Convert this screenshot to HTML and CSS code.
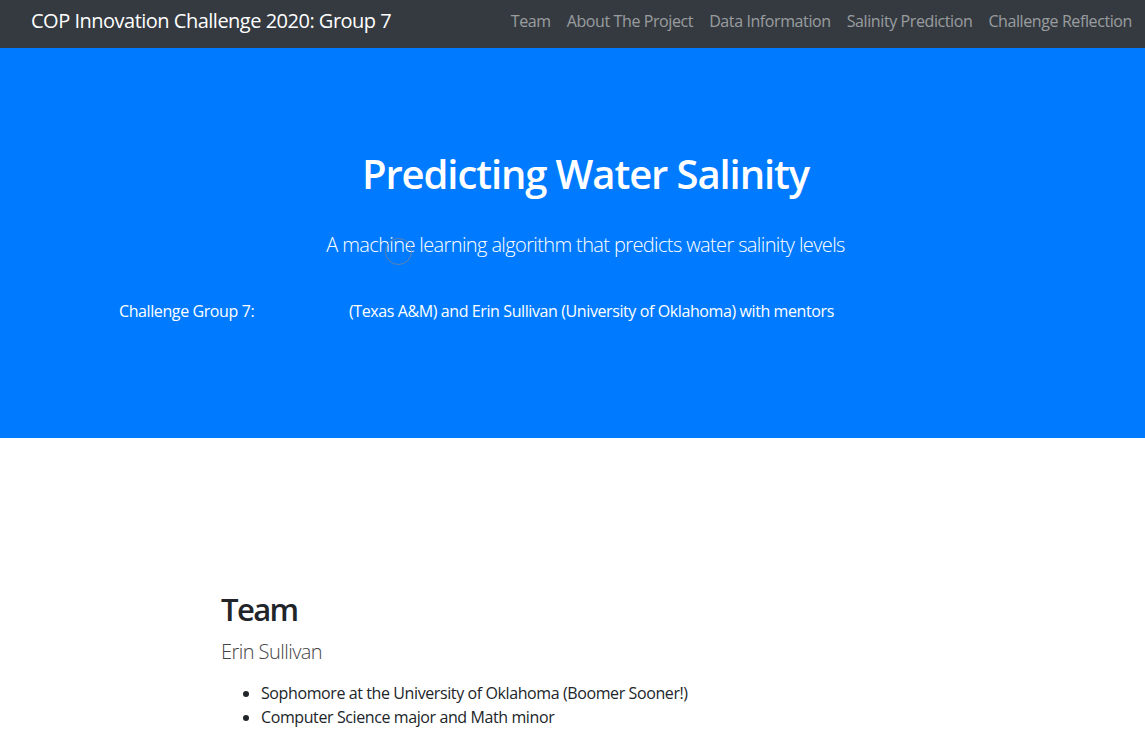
FILE: index.html
```html
<!DOCTYPE html>
<html lang="en">
<head>
<meta charset="utf-8">
<title>COP Innovation Challenge 2020: Group 7</title>
<link rel="stylesheet" href="styles.css">
</head>
<body>
<nav class="navbar">
  <a class="brand" href="#">COP Innovation Challenge 2020: Group 7</a>
  <ul class="nav-links">
    <li><a href="#team">Team</a></li>
    <li><a href="#about">About The Project</a></li>
    <li><a href="#data">Data Information</a></li>
    <li><a href="#prediction">Salinity Prediction</a></li>
    <li><a href="#reflection">Challenge Reflection</a></li>
  </ul>
</nav>
<header class="hero">
  <h1 class="hero-title">Predicting Water Salinity</h1>
  <p class="hero-lead">A machine learning algorithm that predicts water salinity levels</p>
  <p class="hero-group"><span class="group-label">Challenge Group 7:</span><span class="group-names">(Texas A&amp;M) and Erin Sullivan (University of Oklahoma) with mentors</span></p>
  <span class="cursor-ring"></span>
</header>
<section class="team" id="team">
  <h2 class="team-title">Team</h2>
  <p class="member">Erin Sullivan</p>
  <ul class="member-list">
    <li>Sophomore at the University of Oklahoma (Boomer Sooner!)</li>
    <li>Computer Science major and Math minor</li>
  </ul>
</section>
</body>
</html>
```

FILE: styles.css
```css
* { box-sizing: border-box; }
html, body { margin: 0; padding: 0; }
body {
  font-family: "Open Sans", "Noto Sans", "Liberation Sans", sans-serif;
  color: #212529;
  background: #fff;
  font-size: 16px;
  line-height: 1.5;
  overflow: hidden;
}
.navbar {
  height: 48px;
  background: #343a40;
  display: flex;
  align-items: center;
  justify-content: space-between;
  padding: 0 5px 6px 31px;
}
.brand {
  color: #fff;
  text-decoration: none;
  font-size: 20px;
  letter-spacing: -0.5px;
}
.nav-links {
  list-style: none;
  margin: 0;
  padding: 0;
  display: flex;
}
.nav-links a {
  display: block;
  padding: 0 8px;
  color: rgba(255, 255, 255, 0.5);
  text-decoration: none;
  font-size: 16px;
  letter-spacing: -0.4px;
}
.hero {
  position: relative;
  height: 390px;
  background: #007bff;
  color: #fff;
  display: flex;
  flex-direction: column;
  padding-top: 98px;
}
.hero-title {
  margin: 0;
  text-align: center;
  padding-left: 26px;
  font-size: 40px;
  font-weight: 600;
  line-height: 56px;
  letter-spacing: -1.1px;
}
.hero-lead {
  margin: 28px 0 0;
  text-align: center;
  padding-left: 26px;
  font-size: 20px;
  font-weight: 300;
  line-height: 30px;
  letter-spacing: -0.62px;
}
.hero-group {
  margin: 39px 0 0;
  padding-left: 119px;
  font-size: 16px;
  line-height: 24px;
  letter-spacing: -0.4px;
  display: flex;
}
.group-label { width: 230px; }
.cursor-ring {
  position: absolute;
  left: 385px;
  top: 190px;
  width: 27px;
  height: 27px;
  border: 1px solid rgba(110, 130, 165, 0.9);
  border-radius: 50%;
}
.team {
  padding: 151px 0 0 221px;
}
.team-title {
  margin: 0;
  font-size: 31px;
  font-weight: 600;
  line-height: 40px;
  letter-spacing: -1.6px;
}
.member {
  margin: 8px 0 0;
  font-size: 20px;
  font-weight: 300;
  line-height: 30px;
  color: #444;
  letter-spacing: -0.55px;
}
.member-list {
  margin: 14px 0 0;
  padding-left: 40px;
  font-size: 16px;
  line-height: 24px;
  letter-spacing: -0.4px;
}
```
